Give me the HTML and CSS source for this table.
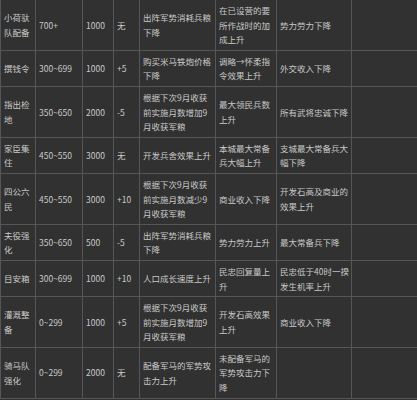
FILE: index.html
```html
<!DOCTYPE html>
<html lang="zh-CN">
<head>
<meta charset="utf-8">
<title>政策表</title>
<link rel="stylesheet" href="styles.css">
</head>
<body>
<table class="policy">
  <colgroup>
    <col class="c-name"><col class="c-range"><col class="c-cost"><col class="c-mod">
    <col class="c-eff"><col class="c-plus"><col class="c-minus"><col class="c-extra">
  </colgroup>
  <tbody>
    <tr><td>小荷驮队配备</td><td>700+</td><td>1000</td><td>无</td><td>出阵军势消耗兵粮下降</td><td>在已设营的要所作战时的加成上升</td><td>势力劳力下降</td><td></td></tr>
    <tr><td>撰钱令</td><td>300~699</td><td>1000</td><td>+5</td><td>购买米马铁炮价格下降</td><td>调略→怀柔指令效果上升</td><td>外交收入下降</td><td></td></tr>
    <tr><td>指出检地</td><td>350~650</td><td>2000</td><td>-5</td><td>根据下次9月收获前实施月数增加9月收获军粮</td><td>最大领民兵数上升</td><td>所有武将忠诚下降</td><td></td></tr>
    <tr><td>家臣集住</td><td>450~550</td><td>3000</td><td>无</td><td>开发兵舍效果上升</td><td>本城最大常备兵大幅上升</td><td>支城最大常备兵大幅下降</td><td></td></tr>
    <tr><td>四公六民</td><td>450~550</td><td>3000</td><td>+10</td><td>根据下次9月收获前实施月数减少9月收获军粮</td><td>商业收入下降</td><td>开发石高及商业的效果上升</td><td></td></tr>
    <tr><td>夫役强化</td><td>350~650</td><td>500</td><td>-5</td><td>出阵军势消耗兵粮下降</td><td>势力劳力上升</td><td>最大常备兵下降</td><td></td></tr>
    <tr><td>目安箱</td><td>300~699</td><td>1000</td><td>+10</td><td>人口成长速度上升</td><td>民忠回复量上升</td><td>民忠低于40时一揆发生机率上升</td><td></td></tr>
    <tr><td>灌溉整备</td><td>0~299</td><td>1000</td><td>+5</td><td>根据下次9月收获前实施月数增加9月收获军粮</td><td>开发石高效果上升</td><td>商业收入下降</td><td></td></tr>
    <tr><td>骑马队强化</td><td>0~299</td><td>2000</td><td>无</td><td>配备军马的军势攻击力上升</td><td>未配备军马的军势攻击力下降</td><td></td><td></td></tr>
  </tbody>
</table>
</body>
</html>
```

FILE: styles.css
```css
html, body {
  margin: 0;
  padding: 0;
  background: #313131;
}

.policy {
  border-collapse: collapse;
  table-layout: fixed;
  width: 417px;
  background: #313131;
  color: #c9c9c9;
  font-family: "Noto Sans CJK SC", "Liberation Sans", sans-serif;
  font-size: 8.5px;
  line-height: 14.6px;
}

.c-name { width: 35px; }
.c-range { width: 47px; }
.c-cost { width: 31px; }
.c-mod { width: 26px; }
.c-eff { width: 76px; }
.c-plus { width: 61px; }
.c-minus { width: 75px; }
.c-extra { width: 66px; }

.policy td {
  border: 1px solid #565656;
  padding: 3px 2px 3px 3px;
  vertical-align: middle;
  text-align: left;
  word-break: break-all;
}

.policy tr:first-child td {
  border-top: 0;
}
```
